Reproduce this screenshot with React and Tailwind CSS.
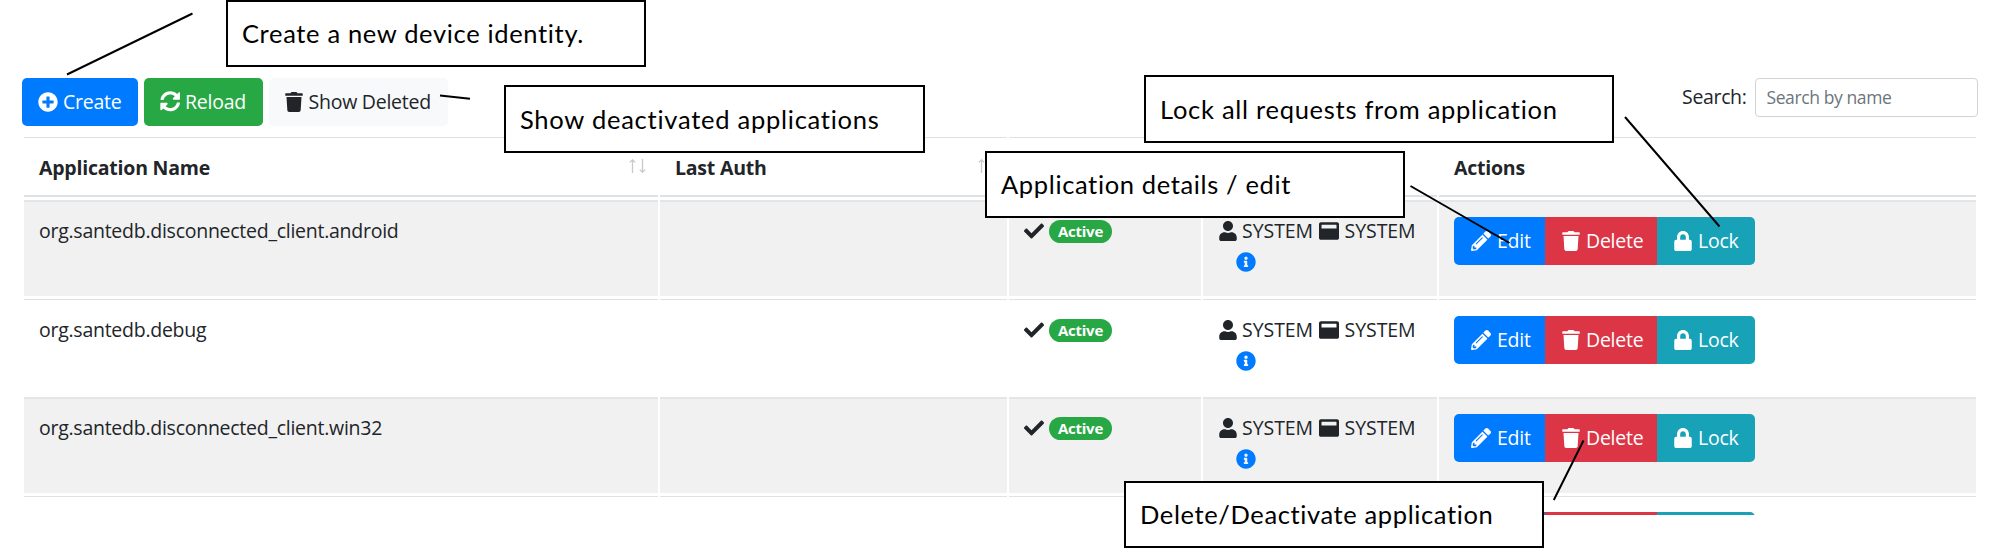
import {
  FaCheck,
  FaInfoCircle,
  FaLock,
  FaPencilAlt,
  FaPlusCircle,
  FaSyncAlt,
  FaTrash,
  FaUser,
  FaWindowMaximize,
} from "react-icons/fa";

const COLUMNS = "grid grid-cols-[634px_347px_192px_234px_537px] gap-x-[2px]";

const APPLICATIONS = [
  { name: "org.santedb.disconnected_client.android", shaded: true, gap: "mb-[3px]" },
  { name: "org.santedb.debug", shaded: false, gap: "mb-[2px]" },
  { name: "org.santedb.disconnected_client.win32", shaded: true, gap: "mb-[3px]" },
];

function SortArrows() {
  return (
    <svg className="mt-[20.5px] mr-3 shrink-0" width="17" height="14" viewBox="0 0 17 14" fill="none" stroke="#c9c9c9" strokeWidth="1.3">
      <path d="M3.5 14V1M0.8 3.4L3.5 0.8L6.2 3.4" />
      <path d="M13.5 0V13M10.8 10.6L13.5 13.2L16.2 10.6" />
    </svg>
  );
}

function HeaderCell({ children, sortable }) {
  return (
    <div className="flex h-[60px] items-start justify-between border-t border-b-2 border-[#dee2e6] pl-[15px] font-bold tracking-[-0.22px]">
      <span className="pt-[15px] leading-[30px]">{children}</span>
      {sortable && <SortArrows />}
    </div>
  );
}

function Cell({ shaded, children }) {
  const look = shaded
    ? "border-t-2 border-[#e3e6e9] bg-[#f1f1f1] pt-[14px]"
    : "border-t border-[#dee2e6] pt-[15px]";
  return <div className={`${look} h-[96px] pl-[15px]`}>{children}</div>;
}

function Actions() {
  return (
    <div className="mt-[0.5px] flex h-[48px] w-[301px] shrink-0 overflow-hidden rounded-[5px] text-white">
      <div className="flex w-[91px] items-center bg-[#007bff] pt-px pl-[17px]">
        <FaPencilAlt size={20} />
        <span className="pl-[6px]">Edit</span>
      </div>
      <div className="flex w-[112px] items-center bg-[#dc3545] pt-px pl-[17px]">
        <FaTrash size={20} className="w-[18px]" />
        <span className="pl-[6px]">Delete</span>
      </div>
      <div className="flex w-[98px] items-center bg-[#17a2b8] pt-px pl-[17px]">
        <FaLock size={20} className="w-[18px]" />
        <span className="pl-[6px]">Lock</span>
      </div>
    </div>
  );
}

function ApplicationRow({ name, shaded, gap }) {
  return (
    <div className={`${COLUMNS} ${gap}`}>
      <Cell shaded={shaded}>
        <div className="leading-[30px] tracking-[-0.26px]">{name}</div>
      </Cell>
      <Cell shaded={shaded} />
      <Cell shaded={shaded}>
        <div className="flex h-[30px] items-center">
          <FaCheck size={20} />
          <span className="ml-[5px] flex h-[23px] w-[63px] items-center justify-center rounded-full bg-[#28a745] pt-px text-[15px] font-bold tracking-[-0.25px] text-white">
            Active
          </span>
        </div>
      </Cell>
      <Cell shaded={shaded}>
        <div className="flex h-[30px] items-center tracking-[-0.05px]">
          <FaUser size={20} className="mb-px ml-px w-[18px]" />
          <span className="w-[82px] pl-[5px]">SYSTEM</span>
          <FaWindowMaximize size={20} className="mb-px" />
          <span className="pl-[5.5px]">SYSTEM</span>
        </div>
        <FaInfoCircle size={20} className="mt-[6px] ml-[18px] text-[#007bff]" />
      </Cell>
      <Cell shaded={shaded}>
        <Actions />
      </Cell>
    </div>
  );
}

function Callout({ place, children }) {
  return (
    <div
      className={`absolute flex items-center border-2 border-black bg-white pl-[14px] font-[Lato,sans-serif] text-[25.5px] leading-none whitespace-nowrap text-black ${place}`}
    >
      {children}
    </div>
  );
}

export default function App() {
  return (
    <div className="relative h-[550px] w-[2000px] overflow-hidden bg-white font-['Open_Sans',sans-serif] text-[19.5px] tracking-[-0.25px] text-[#212529]">
      <div className="h-[515px] overflow-hidden">
        <div className="flex h-[137px] items-start justify-between pt-[77.5px] pr-[22px] pl-[21.5px]">
          <div className="flex gap-[6.5px]">
            <div className="flex h-[48px] w-[116px] items-center rounded-[5px] bg-[#007bff] pl-[16.5px] text-white">
              <FaPlusCircle size={20} />
              <span className="pl-[5px]">Create</span>
            </div>
            <div className="flex h-[48px] w-[118.5px] items-center rounded-[5px] bg-[#28a745] pl-[15.5px] text-white">
              <FaSyncAlt size={20.5} />
              <span className="pl-[5px]">Reload</span>
            </div>
            <div className="flex h-[48px] w-[179px] items-center rounded-[5px] bg-[#f8f9fa] pl-[16px]">
              <FaTrash size={20} className="w-[18px]" />
              <span className="pl-[5.5px]">Show Deleted</span>
            </div>
          </div>
          <div className="flex items-center">
            <span className="pr-[8.5px] tracking-[-0.35px]">Search:</span>
            <div className="flex h-[39px] w-[223px] items-center rounded-[4px] border-[1.5px] border-[#ced4da] pt-px pl-[10.5px] text-[17.5px] tracking-[-0.4px] text-[#6c757d]">
              Search by name
            </div>
          </div>
        </div>

        <div className="pl-6">
          <div className={`${COLUMNS} mb-[3px]`}>
            <HeaderCell sortable>Application Name</HeaderCell>
            <HeaderCell sortable>Last Auth</HeaderCell>
            <HeaderCell />
            <HeaderCell />
            <HeaderCell>Actions</HeaderCell>
          </div>
          {APPLICATIONS.map((app) => (
            <ApplicationRow key={app.name} {...app} />
          ))}
          <div className={COLUMNS}>
            <Cell />
            <Cell />
            <Cell />
            <Cell />
            <Cell>
              <div className="flex h-[48px] w-[301px] overflow-hidden rounded-[5px]">
                <div className="w-[91px] bg-[#007bff]" />
                <div className="w-[112px] bg-[#dc3545]" />
                <div className="w-[98px] bg-[#17a2b8]" />
              </div>
            </Cell>
          </div>
        </div>
      </div>

      <Callout place="top-0 left-[226px] h-[67px] w-[420px] tracking-[0.66px]">Create a new device identity.</Callout>
      <Callout place="top-[85px] left-[504px] h-[68px] w-[421px] pt-px tracking-[0.75px]">Show deactivated applications</Callout>
      <Callout place="top-[75px] left-[1144px] h-[68px] w-[470px] pt-px tracking-[0.72px]">Lock all requests from application</Callout>
      <Callout place="top-[151px] left-[985px] h-[67px] w-[420px] tracking-[0.64px]">Application details / edit</Callout>
      <Callout place="top-[481px] left-[1124px] h-[67px] w-[420px] tracking-[0.62px]">Delete/Deactivate application</Callout>

      <svg className="absolute inset-0" width="2000" height="550" stroke="#000" strokeWidth="2">
        <path d="M67 74.5L192.500 13.500M440 95.500L470 98.700M1625 117L1719.500 226.500M1410.500 186L1509.500 243M1553.800 500L1583.500 440.500" />
      </svg>
    </div>
  );
}
